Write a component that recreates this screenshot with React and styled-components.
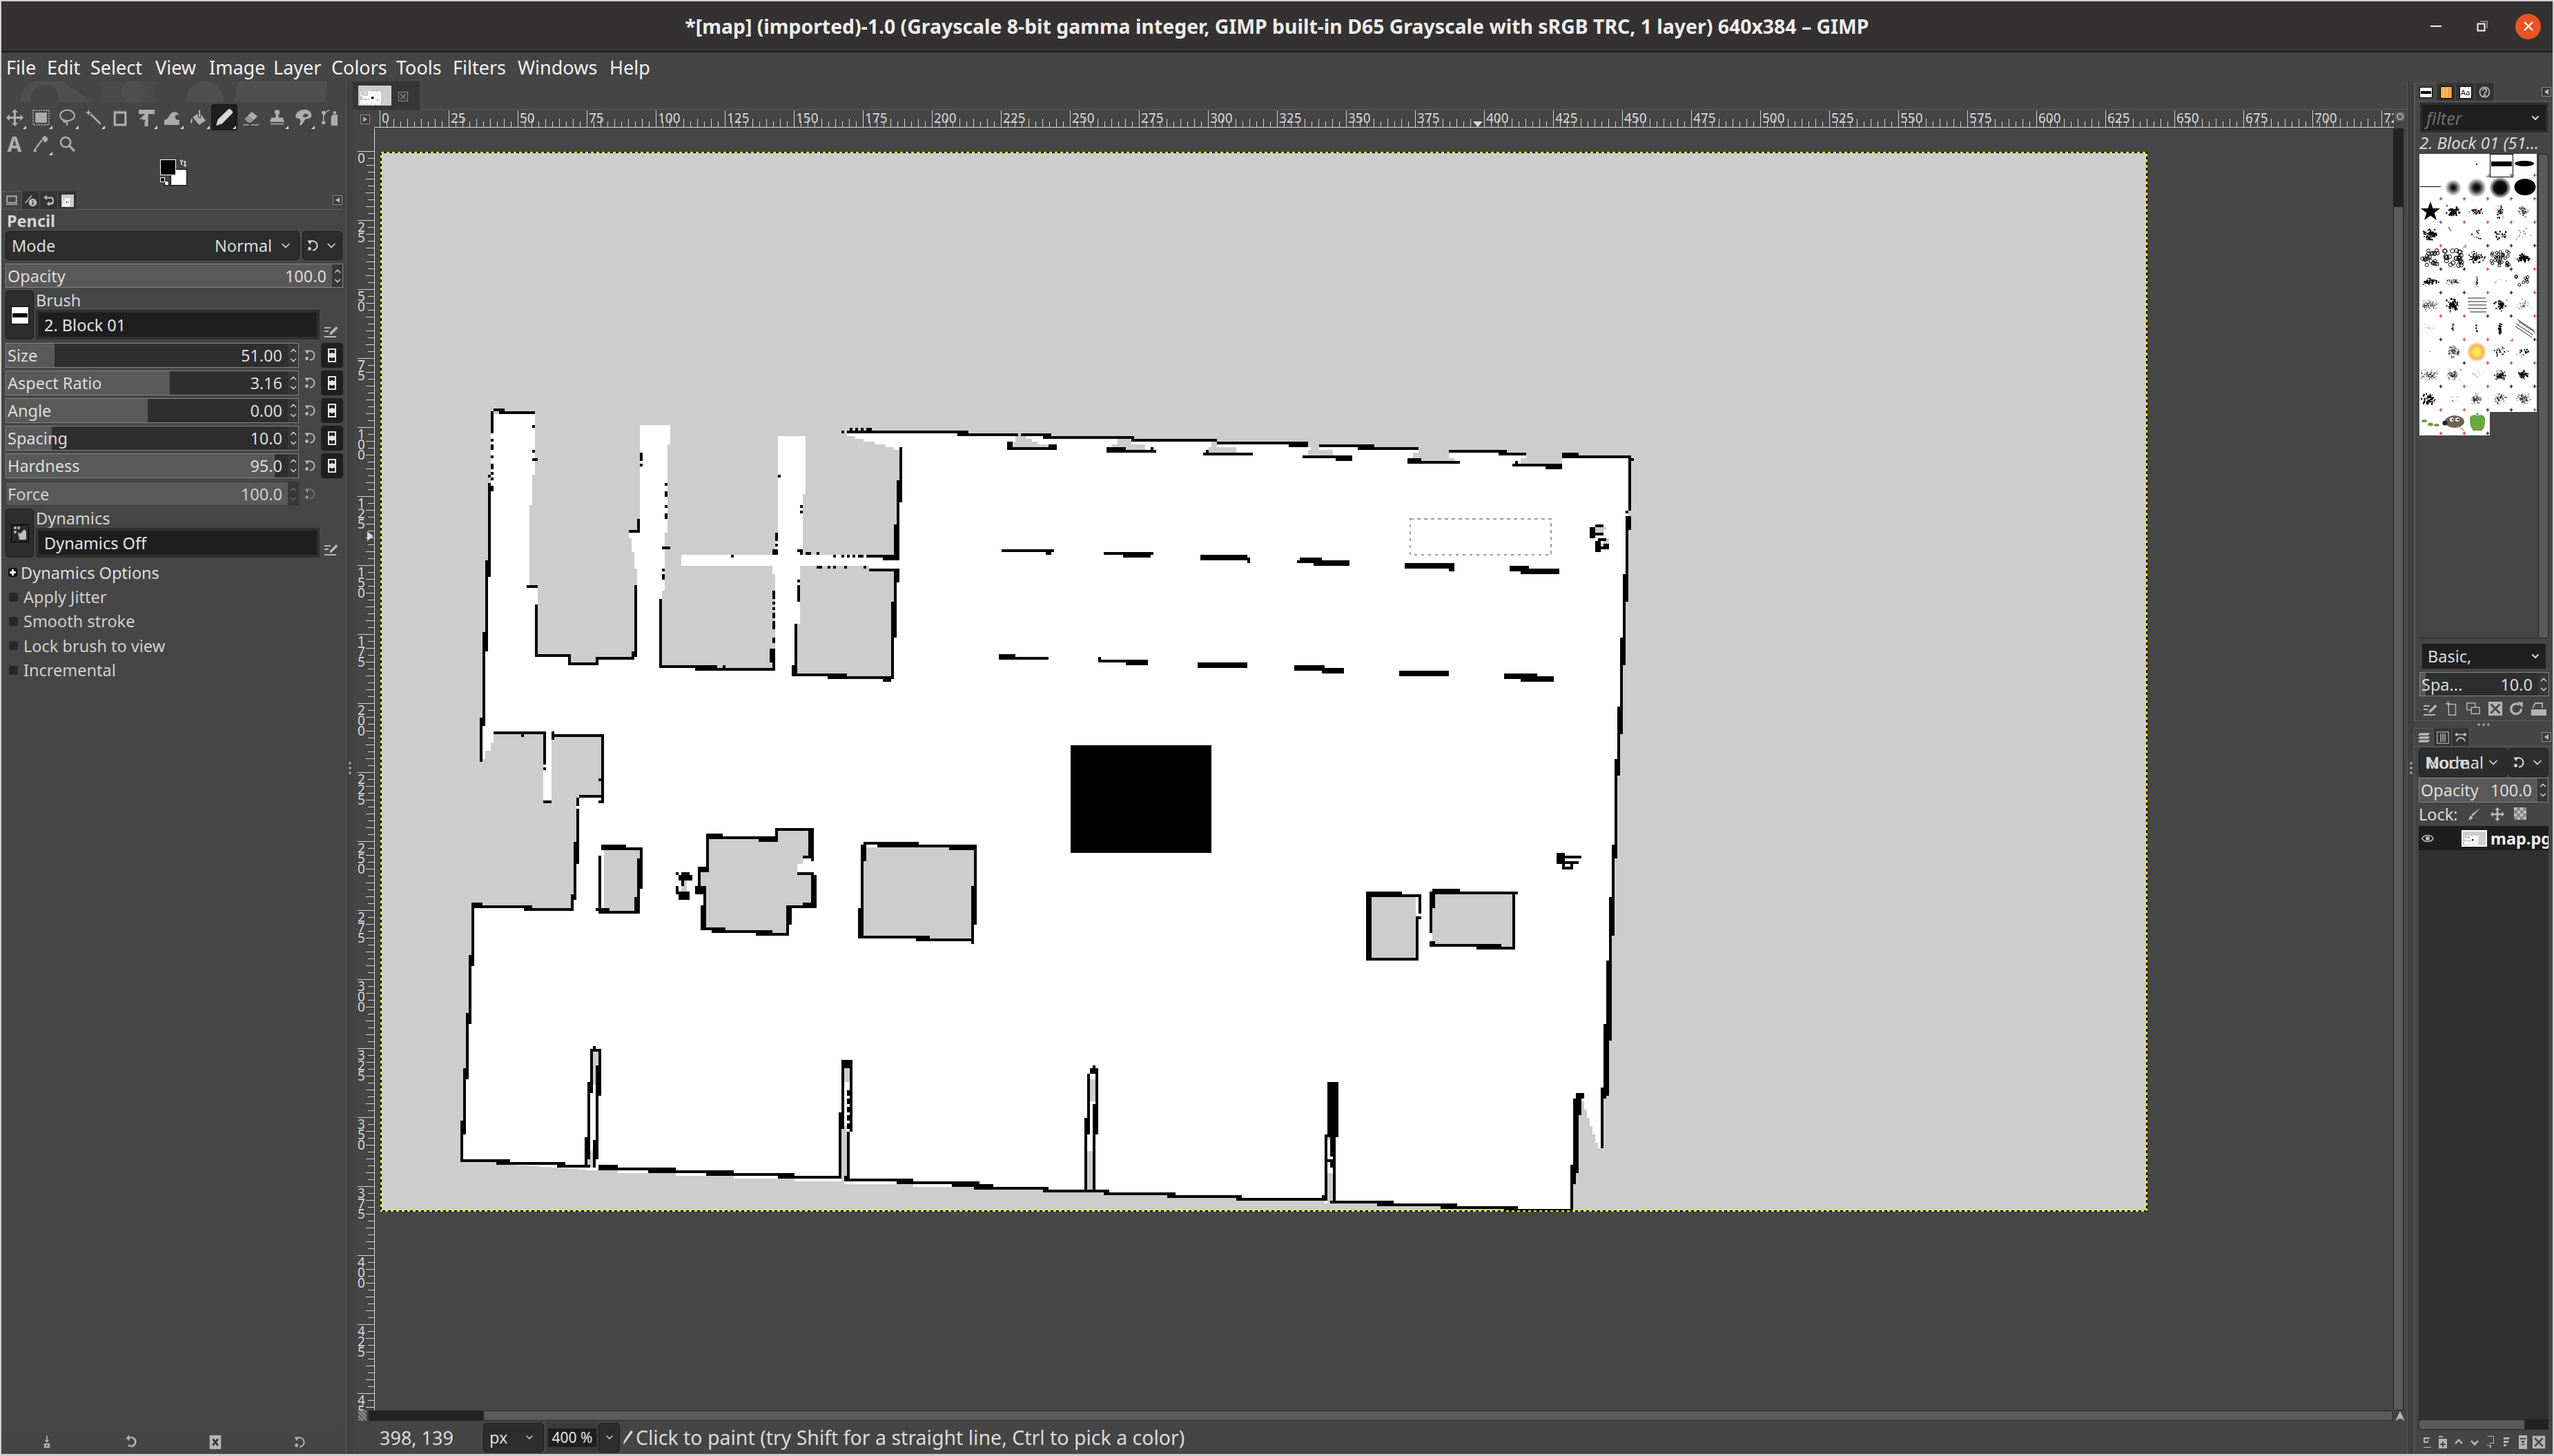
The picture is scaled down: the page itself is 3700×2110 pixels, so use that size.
import React from 'react';
import styled, { createGlobalStyle } from 'styled-components';
import { ChevronDown, ChevronUp } from 'lucide-react';

const GlobalStyle = createGlobalStyle`
  html, body { margin: 0; padding: 0; background: #cfcfcf; }
  * { box-sizing: border-box; }
  body { font-family: "Noto Sans", "Open Sans", sans-serif; }
`;

/* ---------- map data, in image pixels (640x384) ---------- */

const OUTLINE = [
  [41,95],[56,95],[56,117],[55,117],[55,128],[54,128],[54,158],[57,158],[57,183],[69,183],[69,186],[79,186],[79,184],[92,184],[92,181],[93,181],
  [93,151],[92,151],[92,145],[91,145],[91,140],[90,140],[90,138],[94,138],[94,99],[105,99],[105,106],[104,106],[104,138],[103,138],[103,159],[102,159],
  [102,187],[114,187],[114,188],[143,188],[143,153],[142,153],[142,150],[109,150],[109,146],[143,146],[143,139],[144,139],[144,103],[154,103],[154,124],[153,124],
  [153,146],[186,146],[186,135],[187,135],[187,119],[188,119],[188,108],[186,108],[186,107],[183,107],[183,106],[179,106],[179,105],[175,105],[175,104],[172,104],[172,103],[169,103],[169,102],
  [209,102],[209,103],[240,103],[240,104],[272,104],[272,105],[303,105],[303,106],[329,106],[329,107],[354,107],[354,108],[387,108],[387,109],[405,109],[405,110],[428,110],[428,111],
  [452,111],[452,132],[451,132],[451,153],[450,153],[450,176],[449,176],[449,201],[448,201],[448,220],[447,220],[447,251],[446,251],[446,270],[445,270],[445,293],[444,293],[444,316],[443,316],[443,339],[442,339],
  [442,361],[441,361],[441,359],[440,359],[440,356],[439,356],[439,353],[438,353],[438,350],[437,350],[437,347],[436,347],[436,344],[435,344],[435,349],[434,349],[434,370],[433,370],[433,374],[432,374],[432,384],
  [407,384],[407,383],[384,383],[384,382],[361,382],[361,381],[342,381],[342,380],[310,380],[310,379],[285,379],[285,378],[262,378],[262,377],[240,377],[240,376],[215,376],[215,375],[193,375],[193,374],[168,374],[168,373],[150,373],[150,372],[128,372],[128,371],[107,371],[107,370],[86,370],[86,369],[76,369],
  [64,368],[47,367],[47,366],[29,366],[29,351],[30,351],[30,332],[31,332],[31,312],[32,312],[32,291],[33,291],[33,274],[69,274],[69,269],[70,269],[70,250],[71,250],[71,234],[81,234],[81,211],
  [62,211],[62,235],[59,235],[59,211],[41,211],[41,214],[40,214],[40,217],[38,217],[38,220],[36,220],[36,205],[37,205],[37,181],[38,181],[38,154],[39,154],[39,122],[40,122],[40,102],[41,102],
];

const GRAY_POLYS = [
  [[81,253],[94,253],[94,275],[81,275],[81,262],[81,253]],
  [[119,249],[144,249],[144,246],[155,246],[155,255],[153,255],[153,258],[151,258],[151,262],[156,262],[156,273],[147,273],[147,283],[136,283],[120,282],[118,281],[118,269],[116,269],[116,261],[119,261]],
  [[175,252],[215,252],[215,285],[175,285]],
  [[359,270],[375,270],[375,292],[359,292]],
  [[381,269],[410,269],[410,288],[381,288]],
  [[152,150],[177,150],[177,151],[186,151],[186,163],[185,163],[185,190],[151,190],[151,171],[152,171]],
  // notches under the top wall
  [[230,103],[234,103],[234,104],[236,104],[236,105],[238,105],[238,106],[242,106],[242,107],[229,107],[229,105],[230,105]],
  [[267,104],[272,104],[272,106],[277,106],[277,108],[265,108],[265,106],[267,106]],
  [[301,105],[303,105],[303,107],[310,107],[310,109],[300,109],[300,107],[301,107]],
  [[337,106],[340,106],[340,108],[345,108],[345,110],[336,110],[336,108],[337,108]],
  [[376,108],[387,108],[387,111],[389,111],[389,112],[376,112],[376,111],[374,111],[374,109],[376,109]],
  [[415,110],[428,110],[428,113],[413,113],[413,111],[415,111]],
  // inside of the pillars
  [[77,326],[79,326],[79,338],[77,338]],[[75,362],[77,362],[77,368],[75,368]],
  [[168,332],[170,332],[170,337],[168,337]],[[167,353],[169,353],[169,373],[167,373]],
  [[257,336],[259,336],[259,344],[257,344]],[[256,362],[258,362],[258,377],[256,377]],
  [[343,357],[345,357],[345,358],[343,358]],[[343,370],[345,370],[345,381],[343,381]],
  // small gray bits of the clusters
  [[109,264],[111,264],[111,268],[109,268]],[[440,136],[444,136],[444,137],[443,137],[443,138],[439,138],[439,137],[440,137]],
  [[443,140],[445,140],[445,142],[443,142],[443,143],[441,143],[441,142],[443,142]],
];

const BLACK = [
  // top wall
  [41,93,45,94],[43,94,56,95],[40,94,41,102],[167,101,168,102],[169,101,213,102],[170,100,171,101],[172,100,173,101],[174,100,175,101],[176,100,178,101],
  [209,102,231,103],[232,102,243,103],[240,103,273,104],[272,104,303,105],[303,105,336,106],[329,106,336,107],[340,106,360,107],[354,107,376,108],[387,108,408,109],[405,109,415,110],[428,109,434,110],[428,110,453,111],[452,111,454,112],
  // stubs under top wall
  [227,105,229,108],[228,107,245,108],[242,106,245,107],[263,107,270,109],[263,108,281,109],[279,107,280,108],[298,109,316,110],[299,108,300,109],[334,110,352,111],[346,111,352,112],[372,111,377,113],[372,112,391,113],[410,113,428,114],[422,114,428,115],[411,112,412,113],
  // dash rows
  [225,144,244,145],[241,145,243,146],[262,145,280,146],[269,146,279,147],[297,146,314,148],[314,147,315,149],[333,147,341,148],[332,148,351,149],[338,149,351,150],[371,149,389,151],[387,151,389,152],[409,150,416,152],[413,151,427,153],
  [224,182,230,184],[230,183,242,184],[260,183,261,185],[260,184,278,185],[270,185,278,186],[296,185,314,187],[331,186,342,188],[341,187,349,189],[369,188,387,190],[407,189,419,191],[413,190,425,192],
  // the big block
  [250,215,301,254],
  // left wall
  [40,104,41,105],[40,106,41,108],[40,110,41,111],[40,113,41,115],[40,116,41,117],[39,117,40,118],[40,118,41,119],[39,120,40,121],[39,121,41,123],
  [39,122,40,148],[38,148,40,154],[38,154,39,174],[37,174,39,181],[37,181,38,205],[36,205,38,208],[36,208,37,221],
  // room 1
  [55,99,56,100],[55,108,56,109],[55,111,57,112],[53,157,57,158],[56,164,57,183],[56,182,69,183],[68,182,69,186],[68,185,79,186],[78,183,79,186],[78,183,92,184],[91,181,93,183],[92,157,93,181],[93,133,94,138],[90,137,94,138],
  [94,109,95,112],[94,113,95,114],
  // corridor 2 and room 3
  [103,120,104,121],[103,123,104,125],[103,128,104,129],[103,131,104,133],[102,143,105,144],[102,151,103,152],[102,153,103,155],[101,162,102,187],[101,186,114,187],[114,187,143,188],[114,186,122,187],[124,186,125,187],
  [142,159,143,162],[142,163,143,164],[142,165,143,166],[142,167,143,169],[142,170,143,173],[142,176,143,178],[141,180,143,185],[142,185,143,188],[127,146,128,147],
  [144,117,145,118],[143,138,144,141],[143,142,144,143],[142,144,144,146],
  // room 4
  [152,128,153,129],[152,130,153,131],[151,144,153,145],[152,145,153,146],[154,145,156,146],[158,145,159,146],[164,146,165,147],[167,146,168,147],[169,146,170,147],[171,146,172,147],[173,146,175,147],[176,146,182,147],[182,146,188,148],
  [188,107,189,119],[187,119,189,127],[187,127,188,135],[186,135,188,146],
  // room 5
  [158,150,160,151],[162,150,163,151],[164,150,165,151],[168,150,169,151],[175,150,176,151],[177,151,188,152],[186,152,188,156],[186,156,187,163],[185,163,187,176],[185,176,186,191],
  [151,155,152,156],[151,157,152,163],[150,171,151,189],[149,186,151,190],[149,189,169,190],[162,190,186,191],[182,191,185,192],
  // right wall
  [452,111,453,130],[451,132,453,137],[451,137,452,153],[450,153,452,163],[450,163,451,176],[449,176,451,186],[449,186,450,201],[448,201,450,211],[448,211,449,220],[447,220,449,226],[447,226,448,251],[446,251,448,256],[446,256,447,270],[445,270,447,284],[445,284,446,293],[444,293,446,316],[443,316,446,322],[443,322,445,339],[442,339,445,342],[442,342,444,343],[442,343,443,361],
  [451,130,452,131],
  // cluster top right
  [440,135,443,136],[438,136,440,140],[439,138,443,139],[441,140,444,141],[440,141,442,145],[443,142,445,144],[441,143,443,144],
  // bottom right
  [433,341,436,343],[432,343,435,349],[432,349,434,370],[431,367,433,374],[431,374,432,384],
  // bottom wall
  [407,383,432,384],[384,382,412,383],[384,381,390,382],[361,381,390,382],[361,380,367,381],[344,380,367,381],[337,379,341,380],[341,378,343,380],
  [310,379,338,380],[285,378,312,379],[262,377,288,378],[240,376,264,377],[215,375,242,376],[217,374,222,375],[207,373,217,375],[193,373,207,374],[187,372,193,374],[168,372,193,373],
  [150,371,166,372],[144,370,150,372],[128,370,144,371],[118,369,128,371],[107,369,118,370],[97,368,107,370],[86,368,97,369],[79,367,86,369],
  [64,367,76,368],[47,366,67,367],[29,365,47,366],[42,365,47,367],
  // left wall, lower part
  [33,272,37,274],[33,273,52,274],[52,274,70,275],[52,273,55,275],[69,269,70,275],[69,269,71,271],[70,258,71,269],[70,250,72,258],[71,238,72,250],[71,234,72,237],[72,233,81,234],[79,235,81,236],[80,211,81,235],[79,227,80,228],[63,211,81,212],[62,210,63,213],
  [41,210,60,211],[59,210,60,221],[59,221,60,222],[59,223,60,224],[59,235,62,236],[51,211,52,212],[71,247,72,248],
  [33,274,34,291],[32,291,34,295],[32,295,33,312],[31,312,33,316],[31,316,32,332],[30,332,32,336],[30,336,31,351],[29,351,31,356],[29,356,30,366],
  // room A
  [80,251,89,252],[80,252,95,253],[94,252,95,256],[93,256,95,267],[93,267,94,270],[92,270,94,275],[79,275,94,276],[78,274,83,275],[79,255,80,274],
  // cluster
  [107,261,108,262],[109,261,112,262],[108,262,113,264],[109,264,110,266],[107,266,108,269],[108,268,112,271],
  // room B
  [118,247,119,259],[118,247,124,248],[118,248,144,249],[137,249,144,250],[143,245,144,248],[143,245,157,246],[155,246,157,255],[153,255,157,256],[156,256,157,257],[151,261,157,262],[156,262,158,274],[153,272,157,273],[147,273,157,274],[147,274,149,280],[147,280,148,284],[136,283,148,284],[136,282,142,283],[120,282,136,283],[120,281,125,282],[116,281,125,282],[116,273,118,281],[117,269,118,273],[114,266,118,269],[115,259,116,266],[115,259,119,261],
  // room C
  [174,251,176,257],[174,257,175,274],[173,274,175,285],[173,284,194,285],[194,285,214,286],[194,284,199,285],[214,280,215,287],[214,266,216,280],[215,251,216,266],[175,250,195,251],[180,251,216,252],[206,252,216,253],
  // pillar 1
  [77,324,78,325],[76,325,80,326],[76,326,77,337],[75,337,77,341],[75,341,76,357],[74,357,76,365],[74,365,75,368],[79,326,80,331],[78,331,80,342],[78,342,79,358],[77,358,79,365],[77,365,78,368],
  // pillar 2
  [167,329,171,332],[167,332,168,348],[166,348,168,354],[166,354,167,372],[170,332,171,355],[169,340,170,342],[169,343,170,345],[169,346,170,348],[169,349,170,351],[169,352,170,354],[169,355,170,373],[168,371,170,373],
  // pillar 3
  [257,332,260,334],[258,331,259,332],[256,334,257,350],[255,350,257,356],[255,356,256,377],[259,334,260,345],[258,345,260,356],[258,356,259,377],[259,338,260,339],
  // pillar 4
  [343,337,347,357],[342,356,343,378],[341,378,343,380],[345,357,346,381],[344,357,345,364],[343,365,345,366],[344,366,345,368],
  // rooms D and E
  [357,268,359,293],[357,268,370,270],[370,269,377,270],[376,269,377,276],[375,277,377,278],[375,277,376,293],[357,292,376,293],[380,268,382,274],[380,274,381,283],[380,286,382,288],[381,267,391,269],[391,268,412,269],[410,268,411,289],[380,287,406,288],[397,288,411,289],
  // cluster right
  [426,254,429,258],[429,255,435,256],[429,257,434,258],[428,258,429,260],[431,258,432,260],[428,259,432,260],
];

const polyPath = pts => 'M' + pts.map(p => p.join(' ')).join('L') + 'Z';
const rectPath = r => `M${r[0]} ${r[1]}H${r[2]}V${r[3]}H${r[0]}Z`;
const BLACK_D = BLACK.map(rectPath).join('');
const GRAY_D = GRAY_POLYS.map(polyPath).join('');
const WHITE_D = polyPath(OUTLINE);

function MapImage({ width, height, crisp, ants }) {
  return (
    <svg width={width} height={height} viewBox="0 0 640 384" preserveAspectRatio="none" style={{ display: 'block', flex: 'none' }} shapeRendering={crisp ? 'crispEdges' : 'auto'}>
      <rect width="640" height="384" fill="#cdcdcd" />
      <path d={WHITE_D} fill="#fff" />
      <path d={GRAY_D} fill="#cdcdcd" />
      <path d={BLACK_D} fill="#000" />
      {ants && <rect x="373.1" y="133.1" width="51" height="13" fill="none" stroke="#9c9c9c" strokeWidth="0.5" strokeDasharray="1.2 1.3" />}
      {ants && <rect x="0.25" y="0.25" width="639.5" height="383.5" fill="none" stroke="#000" strokeWidth="0.5" />}
      {ants && <rect x="0.25" y="0.25" width="639.5" height="383.5" fill="none" stroke="#f5ee1f" strokeWidth="0.5" strokeDasharray="1 1" />}
    </svg>
  );
}

/* ---------- brushes ---------- */

let seed = 7;
const rnd = () => { seed = (seed * 16807) % 2147483647; return seed / 2147483647; };
const gauss = () => (rnd() + rnd() + rnd() - 1.5) / 1.5;

const speck = (n, rx, ry, rmax, o = 1) => {
  const out = [];
  for (let i = 0; i < n; i++) {
    out.push(<circle key={i} cx={15 + gauss() * rx} cy={15 + gauss() * ry} r={0.3 + rnd() * rmax} fill="#000" opacity={o} />);
  }
  return out;
};
const ring = (n, rx, ry, r) => {
  const out = [];
  for (let i = 0; i < n; i++) {
    out.push(<circle key={i} cx={15 + (rnd() * 2 - 1) * rx} cy={15 + (rnd() * 2 - 1) * ry} r={r} fill="none" stroke="#000" strokeWidth="1" />);
  }
  return out;
};

const BRUSHES = [
  [null, null], [null, null], [<rect key="d" x="14" y="14" width="2" height="2" fill="#222" />, 'tb'],
  [<rect key="b" x="2" y="11" width="30" height="7" fill="#000" />, 'b'],
  [<ellipse key="e" cx="16" cy="14" rx="14" ry="4" fill="#000" />, 'b'],
  [<rect key="l" x="1" y="13" width="30" height="1" fill="#000" />, 'b'],
  [<circle key="s" cx="15" cy="15" r="12" fill="url(#soft)" />, 'b'],
  [<circle key="s" cx="15" cy="15" r="14" fill="url(#soft2)" />, 'b'],
  [<circle key="s" cx="15" cy="15" r="16" fill="url(#soft3)" />, 'b'],
  [<ellipse key="s" cx="17" cy="14" rx="15.5" ry="12" fill="#000" />, 'b'],
  [<path key="st" d="M16 1l3.6 10H30l-8.4 6.4L25 28l-9-6.4L7 28l3.4-10.6L2 11h10.4z" fill="#000" />, 'b'],
  [speck(60, 11, 9, 1.3), 'r'], [speck(50, 13, 6, 0.9), 'r'], [speck(50, 7, 12, 0.9), 'r'], [speck(70, 11, 10, 1, 0.5), 'r'],
  [speck(90, 12, 11, 1.3), 'r'], [<path key="t" d="M8 4l4 6" stroke="#777" strokeWidth="1.5" />, 'tr'], [speck(14, 14, 9, 0.9), 'k'], [speck(18, 13, 10, 1.4), 'k'], [speck(18, 15, 13, 0.5), 'k'],
  [ring(22, 12, 11, 2.5), 'k'], [ring(24, 13, 11, 3), 'k'], [speck(100, 14, 11, 0.9), 'r'], [ring(30, 13, 11, 2), 'k'], [speck(110, 14, 8, 1.1), 'r'],
  [speck(80, 15, 6, 1), 'k'], [speck(70, 14, 6, 0.7, 0.7), 'k'], [speck(30, 3, 13, 0.5), 'r'], [speck(10, 13, 10, 0.6, 0.5), 'k'], [ring(8, 13, 8, 2), 'r'],
  [speck(120, 16, 12, 0.4), 'r'], [speck(90, 12, 11, 1.2), 'r'], [<path key="l" d="M2 5h26M2 10h28M3 15h26M2 20h28M5 25h24" stroke="#222" strokeWidth="1" />, 'k'], [speck(80, 12, 11, 1.2, 0.8), 'k'], [speck(60, 14, 11, 0.8, 0.4), 'r'],
  [speck(30, 13, 10, 0.5, 0.3), 'k'], [speck(24, 3, 9, 1, 0.5), 'r'], [speck(10, 2, 9, 1), 'r'], [speck(40, 2.5, 11, 1.3), 'tr'], [<path key="l" d="M4 8l24 16M8 5l24 16M3 12l24 16M6 2l24 16" stroke="#222" strokeWidth="1" />, 'k'],
  [<rect key="d" x="15" y="14" width="1" height="1" fill="#000" />, null], [speck(70, 12, 10, 1.6, 0.35), 'k'],
  [<g key="sun"><circle cx="15" cy="15" r="15" fill="url(#sun)" /></g>, 'r'], [speck(30, 14, 9, 0.8), 'r'], [speck(36, 13, 9, 1), 'r'],
  [speck(130, 16, 11, 0.4), 'k'], [speck(100, 13, 11, 0.9, 0.5), 'r'], [speck(24, 12, 11, 0.5, 0.4), 'r'], [speck(80, 12, 9, 1.2, 0.6), 'k'], [speck(70, 12, 9, 1.2, 0.8), 'k'],
  [speck(60, 13, 11, 1.3), 'r'], [speck(20, 12, 11, 0.5, 0.35), 'r'], [speck(90, 11, 10, 1.1, 0.35), 'k'], [speck(60, 12, 10, 0.9, 0.7), 'k'], [speck(90, 13, 9, 0.8, 0.6), 'r'],
  [<g key="lv" fill="#6d9c3f"><ellipse cx="7" cy="13" rx="4" ry="2" /><ellipse cx="16" cy="18" rx="4" ry="2.5" /><ellipse cx="25" cy="19" rx="4" ry="2" /></g>, 'r'],
  [<g key="w"><ellipse cx="17" cy="14" rx="14" ry="9" fill="#6e6250" /><circle cx="13" cy="11" r="3" fill="#fff" /><circle cx="21" cy="11" r="3" fill="#fff" /><circle cx="14" cy="11" r="1.3" fill="#000" /><circle cx="22" cy="11" r="1.3" fill="#000" /><circle cx="3" cy="16" r="3.5" fill="#222" /><path d="M22 20l9 7" stroke="#c39050" strokeWidth="1.5" /></g>, 'r'],
  [<g key="p"><path d="M5 10c0-5 6-7 11-5 6-2 12 0 11 7 0 7-1 14-6 14-3 1-7 1-10 0-5-2-6-9-6-16z" fill="#69a944" /><path d="M14 4l2-3 2 3z" fill="#3f6f2a" /><path d="M8 24c4 3 12 3 16 0l-2 3h-12z" fill="#8b6a3e" /></g>, 'k'],
];

const tagColors = { b: '#2b43c7', r: '#c8262e', k: '#000', tb: '#7d9af2', tr: '#f28f94' };

function BrushTag({ t }) {
  if (!t) return null;
  if (t[0] === 't') return <path d="M34 28v6h-6z" fill={tagColors[t]} />;
  return <path d="M28.5 31h5M31 28.5v5" stroke={tagColors[t]} strokeWidth="1.2" />;
}

function BrushGrid() {
  return (
    <svg width="170" height="408" viewBox="0 0 170 408" style={{ display: 'block' }}>
      <defs>
        <radialGradient id="soft"><stop offset="0" stopColor="#000" /><stop offset="0.25" stopColor="#222" /><stop offset="1" stopColor="#fff" /></radialGradient>
        <radialGradient id="soft2"><stop offset="0" stopColor="#000" /><stop offset="0.35" stopColor="#222" /><stop offset="1" stopColor="#fff" /></radialGradient>
        <radialGradient id="soft3"><stop offset="0" stopColor="#000" /><stop offset="0.55" stopColor="#111" /><stop offset="1" stopColor="#fff" /></radialGradient>
        <radialGradient id="sun"><stop offset="0.25" stopColor="#f7ec50" /><stop offset="0.65" stopColor="#f6b45c" /><stop offset="1" stopColor="#fff" /></radialGradient>
      </defs>
      <rect width="170" height="374" fill="#fff" />
      <rect y="374" width="102" height="34" fill="#fff" />
      {BRUSHES.map((b, i) => (
        <g key={i} transform={`translate(${(i % 5) * 34} ${Math.floor(i / 5) * 34})`}>
          {b[0]}
          <BrushTag t={b[1]} />
        </g>
      ))}
      <rect x="102.5" y="0.5" width="33" height="33" fill="none" stroke="#000" />
    </svg>
  );
}

/* ---------- icons ---------- */

const Ic = ({ s = 24, w, h, children, vb = '0 0 24 24' }) => (
  <svg width={w || s} height={h || s} viewBox={vb} fill="currentColor" style={{ display: 'block', flex: 'none' }}>{children}</svg>
);

const ToolIcons = {
  move: <path d="M12 0l4.5 4.5h-3v6h6v-3L24 12l-4.5 4.5v-3h-6v6h3L12 24l-4.5-4.5h3v-6h-6v3L0 12l4.5-4.5v3h6v-6h-3z" />,
  rect: <g><rect x="1" y="2" width="22" height="20" fill="none" stroke="currentColor" strokeWidth="1.6" strokeDasharray="2 1.6" /><rect x="4" y="5" width="16" height="14" /></g>,
  lasso: <g fill="none" stroke="currentColor" strokeWidth="2"><ellipse cx="12" cy="9" rx="10" ry="7.5" /><path d="M8 15c-3 2 0 4 2 3 3-1 2 2 1 5" /></g>,
  wand: <g><path d="M8 7l14 14" stroke="currentColor" strokeWidth="2.6" /><path d="M5 1l1.2 2.8L9 5 6.2 6.2 5 9 3.8 6.2 1 5l2.8-1.2z" /></g>,
  crop: <g fill="none" stroke="currentColor"><path d="M4 3h16" strokeWidth="1.2" strokeDasharray="2 1.5" /><path d="M5 5h15v17H5z" strokeWidth="3" /></g>,
  transform: <g><path d="M2 1h22v6H15v17H10v-7L3 14l7-6V7H2z" /><path d="M2 16l5-3v2h4v3H7v2z" fill="#454545" /></g>,
  warp: <path d="M1 22v-7c3 0 5-2 7-6 3-6 11-7 14 0-3-2-6-1-6 2 0 4 3 4 6 4v7z" />,
  bucket: <g><path d="M4 11l10-6 8 11-9 6c-3-3-6-7-9-11z" /><path d="M12 1h3v11h-3z" stroke="#454545" /><path d="M3 12c-2 3-3 6-1 8 2-1 2-5 1-8z" /></g>,
  pencil: <path d="M1 23l2.2-8L17 1.5c1-1 2.5-1 3.5 0l2 2c1 1 1 2.5 0 3.5L9 20.5z" />,
  eraser: <g><path d="M3 14L13 4l8 6-9 9H8z" opacity=".75" /><path d="M13 4l8 6-4.5 4.5-8-6z" /><path d="M1 22h8M12 22h11" stroke="currentColor" strokeWidth="1.5" /></g>,
  clone: <g><circle cx="12" cy="4.5" r="3.5" /><path d="M10.5 7h3l.8 5H20l2 6H2l2-6h5.7z" /><path d="M3 20h18v1.5H3z" /></g>,
  smudge: <path d="M1 10C2 3 10 0 16 1c6 1 8 6 7 10-3 3-7 2-9 4-2 3-3 6-6 8-2 0-1-3 0-5 1-3-1-4-3-5-2 0-4-1-4-3zm10 0c2 2 6 2 8-1-1-3-6-4-8 1z" fillRule="evenodd" />,
  path: <g><rect x="1" y="3" width="5" height="4" /><rect x="1" y="17" width="5" height="4" /><path d="M3.5 7v10" stroke="currentColor" strokeWidth="1.4" /><path d="M3.5 10C5 5 9 2 12 2" fill="none" stroke="currentColor" strokeWidth="1.4" /><path d="M16 8h7v15h-9V11zM17 3h4v4h-4z" /></g>,
  picker: <g><path d="M15 2c2-2 5 0 6 2s0 4-2 5l-2 1-4-5z" /><path d="M13 7L4 19l-1 3" fill="none" stroke="currentColor" strokeWidth="2.2" /><circle cx="3.5" cy="21.5" r="2" /></g>,
  zoom: <g fill="none" stroke="currentColor"><circle cx="9.5" cy="9.5" r="7.5" strokeWidth="2.6" /><path d="M15 15l8 8" strokeWidth="3.4" /></g>,
};

const TOOLS = [
  ['move', 1], ['rect', 1], ['lasso', 1], ['wand', 1], ['crop', 0], ['transform', 1], ['warp', 1], ['bucket', 1],
  ['pencil', 1], ['eraser', 0], ['clone', 1], ['smudge', 1], ['path', 0],
];

const ResetIc = ({ dim }) => (
  <Ic s={18}>
    <path d="M5 6a9 9 0 1 1 7 15" fill="none" stroke="currentColor" strokeWidth="2.4" strokeDasharray={dim ? '2.5 1.5' : 'none'} />
    <path d="M2 2l8 0-3 8z" />
    <circle cx="6" cy="18" r="3.2" />
  </Ic>
);
const LinkIc = () => (
  <Ic w={14} h={20} vb="0 0 14 20">
    <path d="M2 1h10v7H2zM2 12h10v7H2z" fill="none" stroke="#e4e4e4" strokeWidth="2" />
    <path d="M6 6h2v8H6z" fill="#e4e4e4" />
    <path d="M1 9h12v2H1z" fill="#e4e4e4" />
  </Ic>
);
const EditIc = () => (
  <Ic s={22} vb="0 0 22 22">
    <path d="M1 7h9M1 12h6M1 20h17" stroke="currentColor" strokeWidth="2" />
    <path d="M9 14l9-9 2.5 2.5-9 9-3 .5z" />
  </Ic>
);
const ConfigIc = () => (
  <Ic s={14} vb="0 0 14 14">
    <rect x="0.5" y="0.5" width="13" height="13" fill="#3b3b3b" stroke="#8c8c8c" />
    <path d="M10 3v8L4 7z" fill="#bcbcbc" />
  </Ic>
);
const Chev = styled(ChevronDown).attrs({ size: 20, strokeWidth: 1.8 })`
  color: #e6e6e6;
  flex: none;
`;

/* ---------- window chrome ---------- */

const Page = styled.div`
  width: 3700px;
  height: 2110px;
  padding: 2px 2px 3px;
  background: #cfcfcf;
  display: flex;
  flex-direction: column;
  overflow: hidden;
  color: #dcdcdc;
  font-size: 23.5px;
`;

const TitleBar = styled.div`
  height: 74px;
  flex: none;
  border-bottom: 2px solid #1d1d1d;
  background: #333132;
  display: grid;
  grid-template-columns: 1fr auto 1fr;
  align-items: center;
`;

const Title = styled.div`
  grid-column: 2;
  font-family: "Noto Sans", sans-serif;
  font-weight: 700;
  font-size: 28.4px;
  color: #ededed;
  white-space: nowrap;
`;

const WinButtons = styled.div`
  grid-column: 3;
  justify-self: end;
  display: flex;
  align-items: center;
  padding-right: 2px;
`;

const WinButton = styled.div`
  width: 67px;
  height: 38px;
  display: flex;
  align-items: center;
  justify-content: center;
`;

const CloseDot = styled.div`
  width: 37px;
  height: 37px;
  border-radius: 50%;
  background: #e95420;
  display: flex;
  align-items: center;
  justify-content: center;
`;

const MenuBar = styled.div`
  height: 42px;
  flex: none;
  background: #454545;
  display: flex;
  align-items: center;
  padding-left: 7px;
  font-size: 27px;
  color: #f0f0f0;
`;

const MenuItem = styled.div`
  width: ${p => p.$w}px;
  flex: none;
  white-space: nowrap;
`;

const Main = styled.div`
  flex: 1;
  min-height: 0;
  display: flex;
  background: #454545;
`;

const Sash = styled.div`
  width: 9px;
  flex: none;
  background: #404040;
  display: flex;
  flex-direction: column;
  align-items: center;
  justify-content: center;
  gap: 3px;
`;

const SashDot = styled.span`
  width: 4px;
  height: 4px;
  border-radius: 50%;
  background: #9a9a9a;
`;

const Grip = () => (
  <Sash>
    <SashDot />
    <SashDot />
    <SashDot />
  </Sash>
);

/* ---------- left dock ---------- */

const LeftDock = styled.div`
  width: 500px;
  flex: none;
  display: flex;
  flex-direction: column;
  border-right: 1px solid #5c5c5c;
`;

const Ghost = styled.svg`
  display: block;
  flex: none;
`;

const ToolGrid = styled.div`
  display: grid;
  grid-template-columns: repeat(13, 38px);
  grid-auto-rows: 38px;
  flex: none;
`;

const ToolButton = styled.div`
  position: relative;
  display: flex;
  align-items: center;
  justify-content: center;
  border-radius: 4px;
  color: ${p => (p.$active ? '#d8d8d8' : '#adadad')};
  background: ${p => (p.$active ? '#1e1e1e' : 'transparent')};
  font-weight: 700;
  font-size: 30px;
  ${p => p.$active && 'box-shadow: inset 0 0 0 1px #151515;'}
  ${p => p.$group && `
    &::after {
      content: '';
      position: absolute;
      right: 2px;
      bottom: 2px;
      border-style: solid;
      border-width: 0 0 5px 5px;
      border-color: transparent transparent #d8d8d8 transparent;
    }
  `}
`;

const ColorArea = styled.div`
  height: 47px;
  flex: none;
  margin-top: 3px;
  display: flex;
  justify-content: center;
`;

const ColorStack = styled.div`
  position: relative;
  width: 40px;
  height: 40px;
`;

const Swatch = styled.div`
  position: absolute;
  left: ${p => p.$x}px;
  top: ${p => p.$y}px;
  width: ${p => p.$s}px;
  height: ${p => p.$s}px;
  background: ${p => p.$c};
  border: 1px solid ${p => p.$b};
`;

const SwapMark = styled.div`
  position: absolute;
  left: 27px;
  top: 0;
  color: #c9c9c9;
`;

const TabStrip = styled.div`
  height: 26px;
  flex: none;
  display: flex;
  align-items: stretch;
  padding-right: 5px;
`;

const DockTab = styled.div`
  width: ${p => p.$w}px;
  display: flex;
  align-items: center;
  justify-content: center;
  color: #b8b8b8;
  background: ${p => (p.$active ? '#454545' : '#333')};
  border-top: 1px solid #5c5c5c;
  border-right: 1px solid #555;
  ${p => p.$active && 'border-left: 1px solid #5c5c5c;'}
  ${p => !p.$active && 'border-top-color: #3a3a3a;'}
`;

const TabFill = styled.div`
  flex: 1;
  display: flex;
  align-items: center;
  justify-content: flex-end;
  padding-right: 0;
`;

const Panel = styled.div`
  flex: 1;
  min-height: 0;
  margin-right: 5px;
  padding: 0 0 0 6px;
  border-top: 1px solid #5c5c5c;
  display: flex;
  flex-direction: column;
  background: #464646;
`;

const ToolName = styled.div`
  height: 31px;
  flex: none;
  font-weight: 700;
  color: #d4d4d4;
  display: flex;
  align-items: center;
  padding-left: 2px;
`;

const ComboRow = styled.div`
  display: flex;
  flex: none;
  gap: ${p => p.$gap ?? 4}px;
  height: 42px;
`;

const Combo = styled.div`
  flex: ${p => (p.$w ? 'none' : 1)};
  width: ${p => (p.$w ? `${p.$w}px` : 'auto')};
  display: flex;
  align-items: center;
  justify-content: space-between;
  gap: 8px;
  padding: 0 ${p => p.$pr ?? 9}px 0 ${p => p.$pl ?? 8}px;
  border-radius: 5px;
  background: #2d2d2d;
  border: 1px solid #1c1c1c;
  color: #dcdcdc;
  position: relative;
`;

const ComboRight = styled.div`
  display: flex;
  align-items: center;
  gap: 10px;
`;

const Slider = styled.div`
  width: ${p => p.$w}px;
  height: ${p => p.$h ?? 36}px;
  flex: none;
  display: flex;
  align-items: center;
  border: 1px solid ${p => (p.$dim ? '#3c3c3c' : '#848484')};
  background: linear-gradient(to right, #595959 ${p => p.$fill}px, #2e2e2e ${p => p.$fill}px);
  color: ${p => (p.$dim ? '#cfcfcf' : '#dcdcdc')};
`;

const SliderLabel = styled.div`
  flex: 1;
  padding-left: 2px;
  white-space: nowrap;
  overflow: hidden;
`;

const SliderValue = styled.div`
  padding-right: 8px;
`;

const SpinCol = styled.div`
  width: 15px;
  height: 100%;
  flex: none;
  display: flex;
  flex-direction: column;
  align-items: center;
  justify-content: center;
  background: #383838;
  color: ${p => (p.$dim ? '#6a6a6a' : '#d8d8d8')};
`;

const Spin = ({ dim }) => (
  <SpinCol $dim={dim}>
    <ChevronUp size={14} strokeWidth={2.4} />
    <ChevronDown size={14} strokeWidth={2.4} />
  </SpinCol>
);

const PickerRow = styled.div`
  display: flex;
  flex: none;
  margin-top: ${p => p.$mt}px;
  height: 71px;
`;

const PickerButton = styled.div`
  width: 41px;
  flex: none;
  border-radius: 5px;
  background: #2d2d2d;
  border: 1px solid #1c1c1c;
  display: flex;
  align-items: center;
  justify-content: center;
`;

const PickerThumb = styled.div`
  width: 26px;
  height: 26px;
  background: ${p => p.$bg};
  border: 1px solid #000;
  display: flex;
  align-items: center;
  justify-content: center;
`;

const PickerBody = styled.div`
  flex: 1;
  min-width: 0;
  display: flex;
  flex-direction: column;
  margin-left: 3px;
`;

const PickerLabel = styled.div`
  height: 28px;
  line-height: 28px;
  flex: none;
  color: #d6d6d6;
`;

const PickerLine = styled.div`
  flex: 1;
  display: flex;
  align-items: flex-end;
`;

const EntryFrame = styled.div`
  width: 411px;
  height: 43px;
  flex: none;
  padding: 4px;
  background: #2f2f2f;
`;

const Entry = styled.div`
  height: 100%;
  background: #1e1e1e;
  display: flex;
  align-items: center;
  padding-left: 8px;
  color: #e4e4e4;
`;

const EditSlot = styled.div`
  flex: 1;
  display: flex;
  justify-content: center;
  padding-bottom: 2px;
  color: #b8b8b8;
`;

const SliderRows = styled.div`
  display: flex;
  flex-direction: column;
  gap: 4px;
  margin-top: 5px;
  flex: none;
`;

const SliderLine = styled.div`
  display: flex;
  align-items: center;
  margin-top: ${p => p.$mt ?? 0}px;
`;

const ResetSlot = styled.div`
  width: 32px;
  flex: none;
  display: flex;
  justify-content: center;
  color: ${p => (p.$dim ? '#8f8f8f' : '#b8b8b8')};
`;

const LinkButton = styled.div`
  width: 32px;
  height: 36px;
  flex: none;
  background: #1f1f1f;
  border-radius: 4px;
  display: flex;
  align-items: center;
  justify-content: center;
`;

const Checks = styled.div`
  margin-top: 4px;
  flex: none;
  color: #d0d0d0;
`;

const CheckRow = styled.div`
  height: ${p => p.$h ?? 35.4}px;
  display: flex;
  align-items: center;
  gap: ${p => p.$gap ?? 8}px;
  padding-left: ${p => p.$pl ?? 5}px;
  color: ${p => (p.$on ? '#dedede' : '#cfcfcf')};
`;

const CheckBox = styled.span`
  width: 13px;
  height: 13px;
  flex: none;
  border-radius: 3px;
  background: ${p => (p.$on ? '#111' : '#282828')};
  display: flex;
  align-items: center;
  justify-content: center;
  color: #fff;
`;

const Spacer = styled.div`
  flex: 1;
`;

const IconBar = styled.div`
  height: 35px;
  flex: none;
  display: grid;
  grid-template-columns: repeat(${p => p.$n}, ${p => p.$cell}px);
  padding-left: ${p => p.$pl}px;
  align-items: center;
  justify-items: center;
  color: #b4b4b4;
`;

/* ---------- center ---------- */

const Center = styled.div`
  flex: 1;
  min-width: 0;
  display: flex;
  flex-direction: column;
  border-right: 1px solid #5c5c5c;
`;

const ImageTabs = styled.div`
  height: 41px;
  flex: none;
  display: flex;
  align-items: stretch;
`;

const ImageTab = styled.div`
  width: 97px;
  flex: none;
  background: #363636;
  display: flex;
  align-items: flex-start;
  padding: 6px 0 0 8px;
  gap: 10px;
`;

const CloseBox = styled.div`
  margin-top: 9px;
  color: #8f8f8f;
`;

const ImageTabRest = styled.div`
  flex: 1;
  border-bottom: 1px solid #5c5c5c;
`;

const RulerRow = styled.div`
  height: 27px;
  flex: none;
  display: flex;
  overflow: hidden;
`;

const RulerCorner = styled.div`
  width: 31px;
  flex: none;
  display: flex;
  align-items: center;
  padding-left: 11px;
`;

const RulerEnd = styled.div`
  width: 19px;
  flex: none;
  padding: 3px 0 0 2px;
  color: #a8a8a8;
`;

const BodyRow = styled.div`
  flex: 1;
  min-height: 0;
  display: flex;
`;

const CanvasArea = styled.div`
  flex: 1;
  min-width: 0;
  overflow: hidden;
  background: #464646;
  padding: 34px 0 0 8px;
`;

const ScrollV = styled.div`
  width: 15px;
  flex: none;
  margin-right: 5px;
  display: flex;
  flex-direction: column;
`;

const Trough = styled.div`
  height: ${p => p.$h}px;
  flex: none;
  background: #222;
`;

const Thumb = styled.div`
  flex: 1;
  background: #5a5a5a;
  border: 1px solid #262626;
  border-radius: 2px;
`;

const ScrollH = styled.div`
  height: 15px;
  flex: none;
  display: flex;
  align-items: stretch;
`;

const NavBox = styled.div`
  width: 23px;
  flex: none;
  display: flex;
  justify-content: flex-end;
  padding-right: 3px;
`;

const Nav = styled.div`
  width: 12px;
  background: repeating-linear-gradient(45deg, #8a8a8a 0 2px, #5c5c5c 2px 4px);
`;

const TroughH = styled.div`
  width: ${p => p.$w}px;
  flex: none;
  background: #222;
`;

const ScrollEnd = styled.div`
  width: 20px;
  flex: none;
  color: #b8b8b8;
  padding-left: 2px;
`;

const StatusBar = styled.div`
  height: 48px;
  flex: none;
  display: flex;
  align-items: center;
  padding-left: 39px;
`;

const Coords = styled.div`
  width: 150px;
  flex: none;
  color: #dadada;
  font-size: 27px;
`;

const StatusCombo = styled.div`
  width: ${p => p.$w}px;
  height: 43px;
  flex: none;
  display: flex;
  align-items: center;
  justify-content: ${p => (p.$center ? 'center' : 'space-between')};
  padding: 0 ${p => (p.$center ? 0 : 12)}px 0 ${p => (p.$center ? 0 : 8)}px;
  background: #2d2d2d;
  border: 1px solid #1c1c1c;
  border-radius: 5px;
  color: #dcdcdc;
`;

const ZoomEntry = styled.div`
  width: 76px;
  height: 43px;
  flex: none;
  margin-left: 3px;
  padding: 8px 3px;
  background: #3a3a3a;
`;

const ZoomText = styled.div`
  height: 100%;
  background: #1f1f1f;
  display: flex;
  align-items: center;
  justify-content: center;
  font-size: 21px;
  color: #e4e4e4;
`;

const StatusMsg = styled.div`
  display: flex;
  align-items: center;
  gap: 3px;
  margin-left: 4px;
  color: #dadada;
  font-size: 28.5px;
  white-space: nowrap;
`;

/* ---------- right dock ---------- */

const RightDock = styled.div`
  width: 201px;
  flex: none;
  display: flex;
  flex-direction: column;
  padding-top: 2px;
`;

const RightUpper = styled.div`
  height: 925px;
  flex: none;
  display: flex;
  flex-direction: column;
  border-left: 1px solid #5c5c5c;
  border-bottom: 1px solid #5c5c5c;
`;

const RightLower = styled.div`
  flex: 1;
  min-height: 0;
  display: flex;
  flex-direction: column;
`;

const HDots = styled.div`
  height: 10px;
  flex: none;
  display: flex;
  align-items: center;
  justify-content: center;
  gap: 3px;
`;

const DockBody = styled.div`
  flex: 1;
  min-height: 0;
  border-top: 1px solid #5c5c5c;
  border-left: 1px solid #5c5c5c;
  padding: 0 6px;
  display: flex;
  flex-direction: column;
`;

const FilterBox = styled.div`
  height: 37px;
  flex: none;
  margin: 5px 4px 0;
  background: #1f1f1f;
  display: flex;
  align-items: center;
  justify-content: space-between;
  padding: 0 7px 0 6px;
  color: #6e6e6e;
  font-style: italic;
  font-size: 25px;
  outline: 3px solid #2d2d2d;
`;

const BrushName = styled.div`
  height: 34px;
  flex: none;
  display: flex;
  align-items: center;
  font-style: italic;
  font-size: 24px;
  color: #d8d8d8;
  white-space: nowrap;
  overflow: hidden;
`;

const BrushRow = styled.div`
  height: 702px;
  flex: none;
  display: flex;
  gap: 2px;
`;

const BrushWell = styled.div`
  width: 170px;
  flex: none;
  background: #464646;
  border-bottom: 1px solid #2a2a2a;
`;

const BrushScroll = styled.div`
  width: 15px;
  flex: none;
  background: #5a5a5a;
  border: 1px solid #262626;
  border-radius: 2px;
`;

const DarkCombo = styled.div`
  height: 36px;
  flex: none;
  margin: 8px 4px 0;
  background: #1f1f1f;
  display: flex;
  align-items: center;
  justify-content: space-between;
  padding: 0 7px 0 8px;
  color: #dcdcdc;
`;

const OverlapText = styled.div`
  position: relative;
  flex: 1;
  height: 30px;
`;

const OverlapSpan = styled.span`
  position: absolute;
  left: ${p => p.$x}px;
  top: 0;
  line-height: 30px;
  white-space: nowrap;
`;

const LockRow = styled.div`
  height: 34px;
  flex: none;
  display: flex;
  align-items: center;
  color: #dcdcdc;
`;

const LockIcons = styled.div`
  display: grid;
  grid-template-columns: repeat(3, 33px);
  justify-items: center;
  margin-left: 8px;
  color: #bdbdbd;
`;

const LayerList = styled.div`
  flex: 1;
  min-height: 0;
  background: #2f2f2f;
  overflow: hidden;
`;

const LayerRow = styled.div`
  height: 35px;
  background: #1d1d1d;
  display: flex;
  align-items: center;
  padding-left: 4px;
  color: #bcbcbc;
`;

const LayerThumb = styled.div`
  margin-left: 40px;
  border: 2px solid #fff;
  flex: none;
`;

const LayerName = styled.div`
  margin-left: 5px;
  font-weight: 700;
  color: #f0f0f0;
  white-space: nowrap;
  overflow: hidden;
`;

const ListBar = styled.div`
  height: 15px;
  flex: none;
  background: #222;
  display: flex;
`;

const ListThumb = styled.div`
  width: 154px;
  background: #5a5a5a;
  border: 1px solid #262626;
  border-radius: 2px;
`;

/* ---------- rulers, drawn ---------- */

function HRuler({ width }) {
  const ticks = [];
  const labels = [];
  for (let x = 0, i = 0; x < width; x += 10, i++) {
    const major = i % 10 === 0;
    const h = major ? 24 : i % 2 ? 8 : 12;
    ticks.push(<rect key={x} x={x + 8} y={25 - h} width="1" height={h} fill="#d4d4d4" />);
    if (major) {
      labels.push(<text key={x} x={x + 11} y="19" fontSize="19" fill="#d8d8d8" fontFamily="Noto Sans, sans-serif">{(i / 10) * 25}</text>);
    }
  }
  return (
    <svg width={width} height="27" style={{ display: 'block', flex: 'none' }}>
      <rect x="0" y="25" width={width} height="1" fill="#d8d8d8" />
      {ticks}
      {labels}
      <path d="M1592 17h14l-7 8z" fill="#d8d8d8" />
    </svg>
  );
}

function VRuler({ height }) {
  const ticks = [];
  const labels = [];
  for (let y = 0, i = 0; y < height; y += 10, i++) {
    const major = i % 10 === 0;
    const w = major ? 24 : i % 2 ? 9 : 12;
    ticks.push(<rect key={y} x={31 - w} y={y + 33} width={w} height="1" fill="#d4d4d4" />);
    if (major) {
      labels.push(
        <text key={y} y={y + 50} fontSize="19" fill="#d8d8d8" fontFamily="Noto Sans, sans-serif">
          {String((i / 10) * 25).split('').map((d, k) => (
            <tspan key={k} x="7" dy={k ? 15 : 0}>{d}</tspan>
          ))}
        </text>
      );
    }
  }
  return (
    <svg width="32" height={height} style={{ display: 'block', flex: 'none' }}>
      <rect x="31" y="0" width="1" height={height} fill="#d8d8d8" />
      {ticks}
      {labels}
      <path d="M21 584l9 7-9 7z" fill="#d8d8d8" />
    </svg>
  );
}

/* ---------- parts ---------- */

const MENU = [['File', 59], ['Edit', 63], ['Select', 94], ['View', 78], ['Image', 93], ['Layer', 84], ['Colors', 94], ['Tools', 82], ['Filters', 94], ['Windows', 133], ['Help', 61]];

const SLIDERS = [
  ['Size', '51.00', 70],
  ['Aspect Ratio', '3.16', 237],
  ['Angle', '0.00', 205],
  ['Spacing', '10.0', 66],
  ['Hardness', '95.0', 389],
];

function LeftPanel() {
  return (
    <Panel>
      <ToolName>Pencil</ToolName>
      <ComboRow>
        <Combo>
          <span>Mode</span>
          <ComboRight>
            <span>Normal</span>
            <Chev />
          </ComboRight>
        </Combo>
        <Combo $w={58} $pl={5} $pr={6}>
          <ResetIc />
          <Chev />
        </Combo>
      </ComboRow>
      <SliderLine $mt={5}>
        <Slider $w={489} $h={35} $fill={474}>
          <SliderLabel>Opacity</SliderLabel>
          <SliderValue>100.0</SliderValue>
          <Spin />
        </Slider>
      </SliderLine>
      <PickerRow $mt={4}>
        <PickerButton>
          <PickerThumb $bg="#fff">
            <Ic w={22} h={6} vb="0 0 22 6"><rect width="22" height="6" fill="#000" /></Ic>
          </PickerThumb>
        </PickerButton>
        <PickerBody>
          <PickerLabel>Brush</PickerLabel>
          <PickerLine>
            <EntryFrame>
              <Entry>2. Block 01</Entry>
            </EntryFrame>
            <EditSlot><EditIc /></EditSlot>
          </PickerLine>
        </PickerBody>
      </PickerRow>
      <SliderRows>
        {SLIDERS.map(([label, value, fill]) => (
          <SliderLine key={label}>
            <Slider $w={425} $fill={fill}>
              <SliderLabel>{label}</SliderLabel>
              <SliderValue>{value}</SliderValue>
              <Spin />
            </Slider>
            <ResetSlot><ResetIc /></ResetSlot>
            <LinkButton><LinkIc /></LinkButton>
          </SliderLine>
        ))}
        <SliderLine $mt={1}>
          <Slider $w={425} $h={35} $fill={410} $dim>
            <SliderLabel>Force</SliderLabel>
            <SliderValue>100.0</SliderValue>
            <Spin dim />
          </Slider>
          <ResetSlot $dim><ResetIc dim /></ResetSlot>
        </SliderLine>
      </SliderRows>
      <PickerRow $mt={4}>
        <PickerButton>
          <PickerThumb $bg="#2a2a2a">
            <Ic s={22} vb="0 0 22 22">
              <circle cx="4" cy="3" r="2" fill="#bdbdbd" /><circle cx="9" cy="3" r="2" fill="#bdbdbd" /><circle cx="4" cy="9" r="2" fill="#bdbdbd" />
              <path d="M8 10l4 1 5-6 3 3v12H10z" fill="#bdbdbd" />
            </Ic>
          </PickerThumb>
        </PickerButton>
        <PickerBody>
          <PickerLabel>Dynamics</PickerLabel>
          <PickerLine>
            <EntryFrame>
              <Entry>Dynamics Off</Entry>
            </EntryFrame>
            <EditSlot><EditIc /></EditSlot>
          </PickerLine>
        </PickerBody>
      </PickerRow>
      <Checks>
        <CheckRow $on $gap={5} $pl={4}>
          <CheckBox $on>
            <Ic s={9} vb="0 0 9 9"><path d="M3 0h3v3h3v3H6v3H3V6H0V3h3z" /></Ic>
          </CheckBox>
          Dynamics Options
        </CheckRow>
        <CheckRow>
          <CheckBox />
          Apply Jitter
        </CheckRow>
        <CheckRow>
          <CheckBox />
          Smooth stroke
        </CheckRow>
        <CheckRow>
          <CheckBox />
          Lock brush to view
        </CheckRow>
        <CheckRow>
          <CheckBox />
          Incremental
        </CheckRow>
      </Checks>
      <Spacer />
    </Panel>
  );
}

function LeftDockPane() {
  return (
    <LeftDock>
      <Ghost width="490" height="33" viewBox="0 0 490 33">
        <g fill="#4f4f4f">
          <path d="M28 30C28 12 38 0 50 0h38l44 30H84C84 14 78 6 63 6S42 14 42 30z" />
          <path d="M142 0h83c-4 10-4 20 0 30h-83c3-10 3-20 0-30z" fill="#4a4a4a" />
          <circle cx="191" cy="15" r="17" />
          <path d="M268 30c0-20 10-30 26-30s28 10 28 30z" />
          <path d="M342 0h131l-5 30H336c4-10 6-20 6-30z" />
        </g>
      </Ghost>
      <ToolGrid>
        {TOOLS.map(([name, group]) => (
          <ToolButton key={name} $active={name === 'pencil'} $group={group}>
            <Ic s={name === 'pencil' ? 26 : 25}>{ToolIcons[name]}</Ic>
          </ToolButton>
        ))}
        <ToolButton>A</ToolButton>
        <ToolButton $group><Ic s={25}>{ToolIcons.picker}</Ic></ToolButton>
        <ToolButton><Ic s={23}>{ToolIcons.zoom}</Ic></ToolButton>
      </ToolGrid>
      <ColorArea>
        <ColorStack>
          <Swatch $x={15} $y={15} $s={24} $c="#fff" $b="#000" />
          <Swatch $x={0} $y={1} $s={23} $c="#000" $b="#fff" />
          <Swatch $x={6} $y={32} $s={7} $c="#fff" $b="#000" />
          <Swatch $x={0} $y={27} $s={7} $c="#000" $b="#fff" />
          <SwapMark>
            <Ic s={13} vb="0 0 13 13"><path d="M1 4l3-3 3 3H5v5H3V4zM12 9l-3 3-3-3h2V5H7V3h3v6z" /></Ic>
          </SwapMark>
        </ColorStack>
      </ColorArea>
      <TabStrip>
        <DockTab $active $w={30}>
          <Ic s={20}><path d="M3 3h18v13H3zM5 5v9h14V5zM2 17h20v2H2zM6 19l-2 4M18 19l2 4" /></Ic>
        </DockTab>
        <DockTab $w={26}>
          <Ic s={20}><path d="M2 16L13 3" stroke="currentColor" strokeWidth="2" /><circle cx="15" cy="15" r="7" /><path d="M14 11h2v2h-2zM14 14h2v5h-2z" fill="#333" /></Ic>
        </DockTab>
        <DockTab $w={26}>
          <Ic s={20}><path d="M9 2L3 7l6 5V9h8c2 0 3 2 3 4s-1 4-3 4h-3v-3l-5 5 5 5v-3h3c4 0 6-4 6-8s-2-7-6-7H9z" transform="scale(.9)" /></Ic>
        </DockTab>
        <DockTab $w={28}>
          <MapImage width={18} height={18} />
        </DockTab>
        <TabFill><ConfigIc /></TabFill>
      </TabStrip>
      <LeftPanel />
      <IconBar $n={4} $cell={122} $pl={5}>
        <Ic s={20}><path d="M11 1h2v7h3l-4 5-4-5h3zM7 14h10v8H7zM10 17v2h4v-2z" fillRule="evenodd" /></Ic>
        <Ic s={20}><path d="M9 3a9 9 0 1 1-3 15l2-2a6 6 0 1 0 1-10v4L3 5l6-6z" /></Ic>
        <Ic s={22}><path d="M3 1h18v22H3z" /><path d="M8 7l8 10M16 7L8 17" stroke="#333" strokeWidth="3" /></Ic>
        <ResetIc />
      </IconBar>
    </LeftDock>
  );
}

function CanvasPane() {
  return (
    <Center>
      <ImageTabs>
        <ImageTab>
          <MapImage width={48} height={29} />
          <CloseBox>
            <Ic s={14} vb="0 0 14 14"><rect x="0.5" y="0.5" width="13" height="13" fill="none" stroke="currentColor" /><path d="M3 3l8 8M11 3l-8 8" stroke="currentColor" strokeWidth="1.3" /></Ic>
          </CloseBox>
        </ImageTab>
        <ImageTabRest />
      </ImageTabs>
      <RulerRow>
        <RulerCorner>
          <Ic s={14} vb="0 0 14 14"><rect x="0.5" y="0.5" width="13" height="13" fill="#3c3c3c" stroke="#8c8c8c" /><path d="M4 3v8l6-4z" fill="#a8a8a8" /></Ic>
        </RulerCorner>
        <HRuler width={2926} />
        <RulerEnd>
          <Ic s={14}><rect width="24" height="24" rx="3" fill="#5b5b5b" /><circle cx="12" cy="12" r="7" fill="none" stroke="#b4b4b4" strokeWidth="3" /></Ic>
        </RulerEnd>
      </RulerRow>
      <BodyRow>
        <VRuler height={1859} />
        <CanvasArea>
          <MapImage width={2560} height={1536} crisp ants />
        </CanvasArea>
        <ScrollV>
          <Trough $h={113} />
          <Thumb />
        </ScrollV>
      </BodyRow>
      <ScrollH>
        <NavBox><Nav /></NavBox>
        <TroughH $w={166} />
        <Thumb />
        <ScrollEnd>
          <Ic s={16}><path d="M12 1l10 22-10-6-10 6z" /></Ic>
        </ScrollEnd>
      </ScrollH>
      <StatusBar>
        <Coords>398, 139</Coords>
        <StatusCombo $w={88}>
          px
          <ChevronDown size={16} strokeWidth={2} />
        </StatusCombo>
        <ZoomEntry><ZoomText>400 %</ZoomText></ZoomEntry>
        <StatusCombo $w={31} $center>
          <ChevronDown size={16} strokeWidth={2} />
        </StatusCombo>
        <StatusMsg>
          <Ic w={16} h={24} vb="0 0 16 24"><path d="M1 23l1-6L12 2l3 2L4 19z" /></Ic>
          Click to paint (try Shift for a straight line, Ctrl to pick a color)
        </StatusMsg>
      </StatusBar>
    </Center>
  );
}

const RIGHT_UPPER_ICONS = [
  <EditIc key="e" />,
  <Ic key="n" s={22}><path d="M7 5h11v17H7z" fill="none" stroke="currentColor" strokeWidth="1.6" /><path d="M2 4h8M6 0v8" stroke="currentColor" strokeWidth="1.6" /></Ic>,
  <Ic key="d" s={22}><rect x="2" y="3" width="13" height="11" fill="none" stroke="currentColor" strokeWidth="1.6" /><rect x="9" y="10" width="13" height="10" fill="#454545" stroke="currentColor" strokeWidth="1.6" /></Ic>,
  <Ic key="x" s={22}><rect x="1" y="1" width="22" height="22" /><path d="M5 5l14 14M19 5L5 19" stroke="#454545" strokeWidth="3" /></Ic>,
  <Ic key="r" s={22}><path d="M19 12a8 8 0 1 1-3-6" fill="none" stroke="currentColor" strokeWidth="3.5" /><path d="M13 1l9 1-1 9z" /></Ic>,
  <Ic key="o" s={24}><path d="M3 11l4-7h10v7" fill="none" stroke="currentColor" strokeWidth="1.8" /><rect x="1" y="13" width="22" height="9" /></Ic>,
];

function RightDockPane() {
  return (
    <RightDock>
      <RightUpper>
        <TabStrip style={{ paddingRight: 2 }}>
          <DockTab $active $w={32}>
            <PickerThumb $bg="#fff" style={{ width: 19, height: 16 }}>
              <Ic w={15} h={4} vb="0 0 15 4"><rect width="15" height="4" fill="#000" /></Ic>
            </PickerThumb>
          </DockTab>
          <DockTab $w={28}>
            <Ic w={18} h={18} vb="0 0 18 18"><rect width="18" height="18" fill="#000" /><rect x="1" y="1" width="16" height="16" fill="#f6a53a" /><path d="M5 1v16M10 1v16" stroke="#fbd084" strokeWidth="1.5" /></Ic>
          </DockTab>
          <DockTab $w={28}>
            <PickerThumb $bg="#fff" style={{ width: 18, height: 18, color: '#111', fontSize: 11 }}>Aa</PickerThumb>
          </DockTab>
          <DockTab $w={28}>
            <Ic s={17}><circle cx="12" cy="12" r="10" fill="none" stroke="currentColor" strokeWidth="2.5" /><path d="M8 9c0-5 8-5 8 0 0 3-4 3-4 6M11 17h2v2h-2z" fill="none" stroke="currentColor" strokeWidth="2.4" /></Ic>
          </DockTab>
          <TabFill><ConfigIc /></TabFill>
        </TabStrip>
        <DockBody>
          <FilterBox>
            filter
            <ChevronDown size={16} strokeWidth={3} color="#ddd" />
          </FilterBox>
          <BrushName>2. Block 01 (51...</BrushName>
          <BrushRow>
            <BrushWell><BrushGrid /></BrushWell>
            <BrushScroll />
          </BrushRow>
          <DarkCombo>
            Basic,
            <ChevronDown size={16} strokeWidth={3} color="#ddd" />
          </DarkCombo>
          <SliderLine $mt={5}>
            <Slider $w={188} $h={35} $fill={8}>
              <SliderLabel>Spa...</SliderLabel>
              <SliderValue>10.0</SliderValue>
              <Spin />
            </Slider>
          </SliderLine>
          <IconBar $n={6} $cell={31.4} $pl={0}>
            {RIGHT_UPPER_ICONS}
          </IconBar>
        </DockBody>
      </RightUpper>
      <RightLower>
        <HDots>
          <SashDot />
          <SashDot />
          <SashDot />
        </HDots>
        <TabStrip style={{ paddingRight: 2 }}>
          <DockTab $active $w={29}>
            <Ic s={20}><path d="M4 4h18l-3 4H1zM4 10h18l-3 4H1zM4 16h18l-3 4H1z" /></Ic>
          </DockTab>
          <DockTab $w={26}>
            <Ic s={18}><rect x="1" y="1" width="22" height="22" fill="none" stroke="currentColor" strokeWidth="1.5" /><path d="M7 4h2v16H7zM11 4h2v16h-2zM15 4h2v16h-2z" /></Ic>
          </DockTab>
          <DockTab $w={26}>
            <Ic s={18}><circle cx="4" cy="6" r="3" /><circle cx="20" cy="6" r="3" /><path d="M4 6h16" stroke="currentColor" strokeWidth="2" /><path d="M4 19C6 10 18 10 20 19" fill="none" stroke="currentColor" strokeWidth="2.5" /></Ic>
          </DockTab>
          <TabFill><ConfigIc /></TabFill>
        </TabStrip>
        <DockBody>
          <ComboRow $gap={1} style={{ marginTop: 2 }}>
            <Combo $w={129} $pl={8} $pr={10}>
              <OverlapText>
                <OverlapSpan $x={0}>Mode</OverlapSpan>
                <OverlapSpan $x={2}>Normal</OverlapSpan>
              </OverlapText>
              <Chev />
            </Combo>
            <Combo $w={58} $pl={5} $pr={6}>
              <ResetIc />
              <Chev />
            </Combo>
          </ComboRow>
          <SliderLine $mt={1}>
            <Slider $w={188} $h={36} $fill={172}>
              <SliderLabel>Opacity</SliderLabel>
              <SliderValue>100.0</SliderValue>
              <Spin />
            </Slider>
          </SliderLine>
          <LockRow>
            Lock:
            <LockIcons>
              <Ic s={20}><path d="M22 1L9 15l-3-2z" /><path d="M5 14l4 3c-1 4-5 5-8 5 2-2 2-6 4-8z" /></Ic>
              <Ic s={20}>{ToolIcons.move}</Ic>
              <Ic s={18}><path d="M0 0h6v6H0zM12 0h6v6h-6zM6 6h6v6H6zM18 6h6v6h-6zM0 12h6v6H0zM12 12h6v6h-6zM6 18h6v6H6zM18 18h6v6h-6z" /><path d="M6 0h6v6H6zM18 0h6v6h-6zM0 6h6v6H0zM12 6h6v6h-6zM6 12h6v6H6zM18 12h6v6h-6zM0 18h6v6H0zM12 18h6v6h-6z" opacity=".55" /></Ic>
            </LockIcons>
          </LockRow>
          <LayerList>
            <LayerRow>
              <Ic s={18}><path d="M1 12c5-8 17-8 22 0-5 8-17 8-22 0z" fill="none" stroke="currentColor" strokeWidth="2" /><circle cx="12" cy="12" r="4" /></Ic>
              <LayerThumb><MapImage width={33} height={20} /></LayerThumb>
              <LayerName>map.pgm</LayerName>
            </LayerRow>
          </LayerList>
          <ListBar><ListThumb /></ListBar>
          <IconBar $n={8} $cell={23.2} $pl={0}>
            <Ic w={12} h={18} vb="0 0 12 18"><path d="M1 2h9v2H3v4h4V5h1v5H1zM1 16h11v1H1z" /></Ic>
            <Ic w={12} h={18} vb="0 0 12 18"><path d="M0 0h6v2H0zM0 4h12v14H0z" /><path d="M5 8h2v3h3v2H7v3H5v-3H2v-2h3z" fill="#454545" /></Ic>
            <Ic s={16}><path d="M12 4l9 10-3 2-6-6-6 6-3-2z" /></Ic>
            <Ic s={16}><path d="M12 20l9-10-3-2-6 6-6-6-3 2z" /></Ic>
            <Ic w={12} h={18} vb="0 0 12 18"><path d="M2 0h9v11H4v-1h6V1H2zM1 13h6v4H5v-3H1z" /></Ic>
            <Ic w={12} h={18} vb="0 0 12 18"><path d="M1 2h9L8 5H1zM1 7h8L7 10H1zM1 12h5L4 15H1z" /></Ic>
            <Ic w={12} h={20} vb="0 0 12 20"><path d="M0 0h12v20H0z" /><path d="M2 4h8v2H2zM3 8h6l-2 3H5zM2 14l4-2 4 2" fill="#454545" /></Ic>
            <Ic s={20}><rect x="1" y="1" width="22" height="22" /><path d="M5 5l14 14M19 5L5 19" stroke="#454545" strokeWidth="3" /></Ic>
          </IconBar>
        </DockBody>
      </RightLower>
    </RightDock>
  );
}

export default function App() {
  return (
    <>
      <GlobalStyle />
      <Page>
        <TitleBar>
          <Title>*[map] (imported)-1.0 (Grayscale 8-bit gamma integer, GIMP built-in D65 Grayscale with sRGB TRC, 1 layer) 640x384 – GIMP</Title>
          <WinButtons>
            <WinButton>
              <Ic w={16} h={2} vb="0 0 16 2"><rect width="16" height="2" fill="#f2f2f2" /></Ic>
            </WinButton>
            <WinButton>
              <Ic s={16} vb="0 0 16 16"><path d="M5 1h10v10" fill="none" stroke="#9a9a9a" strokeWidth="1.5" /><rect x="1.5" y="4.5" width="10" height="10" fill="none" stroke="#f2f2f2" strokeWidth="2" /></Ic>
            </WinButton>
            <WinButton>
              <CloseDot>
                <Ic s={16} vb="0 0 16 16"><path d="M2 2l12 12M14 2L2 14" stroke="#fff" strokeWidth="2.4" /></Ic>
              </CloseDot>
            </WinButton>
          </WinButtons>
        </TitleBar>
        <MenuBar>
          {MENU.map(([label, w]) => <MenuItem key={label} $w={w}>{label}</MenuItem>)}
        </MenuBar>
        <Main>
          <LeftDockPane />
          <Grip />
          <CanvasPane />
          <Grip />
          <RightDockPane />
        </Main>
      </Page>
    </>
  );
}
